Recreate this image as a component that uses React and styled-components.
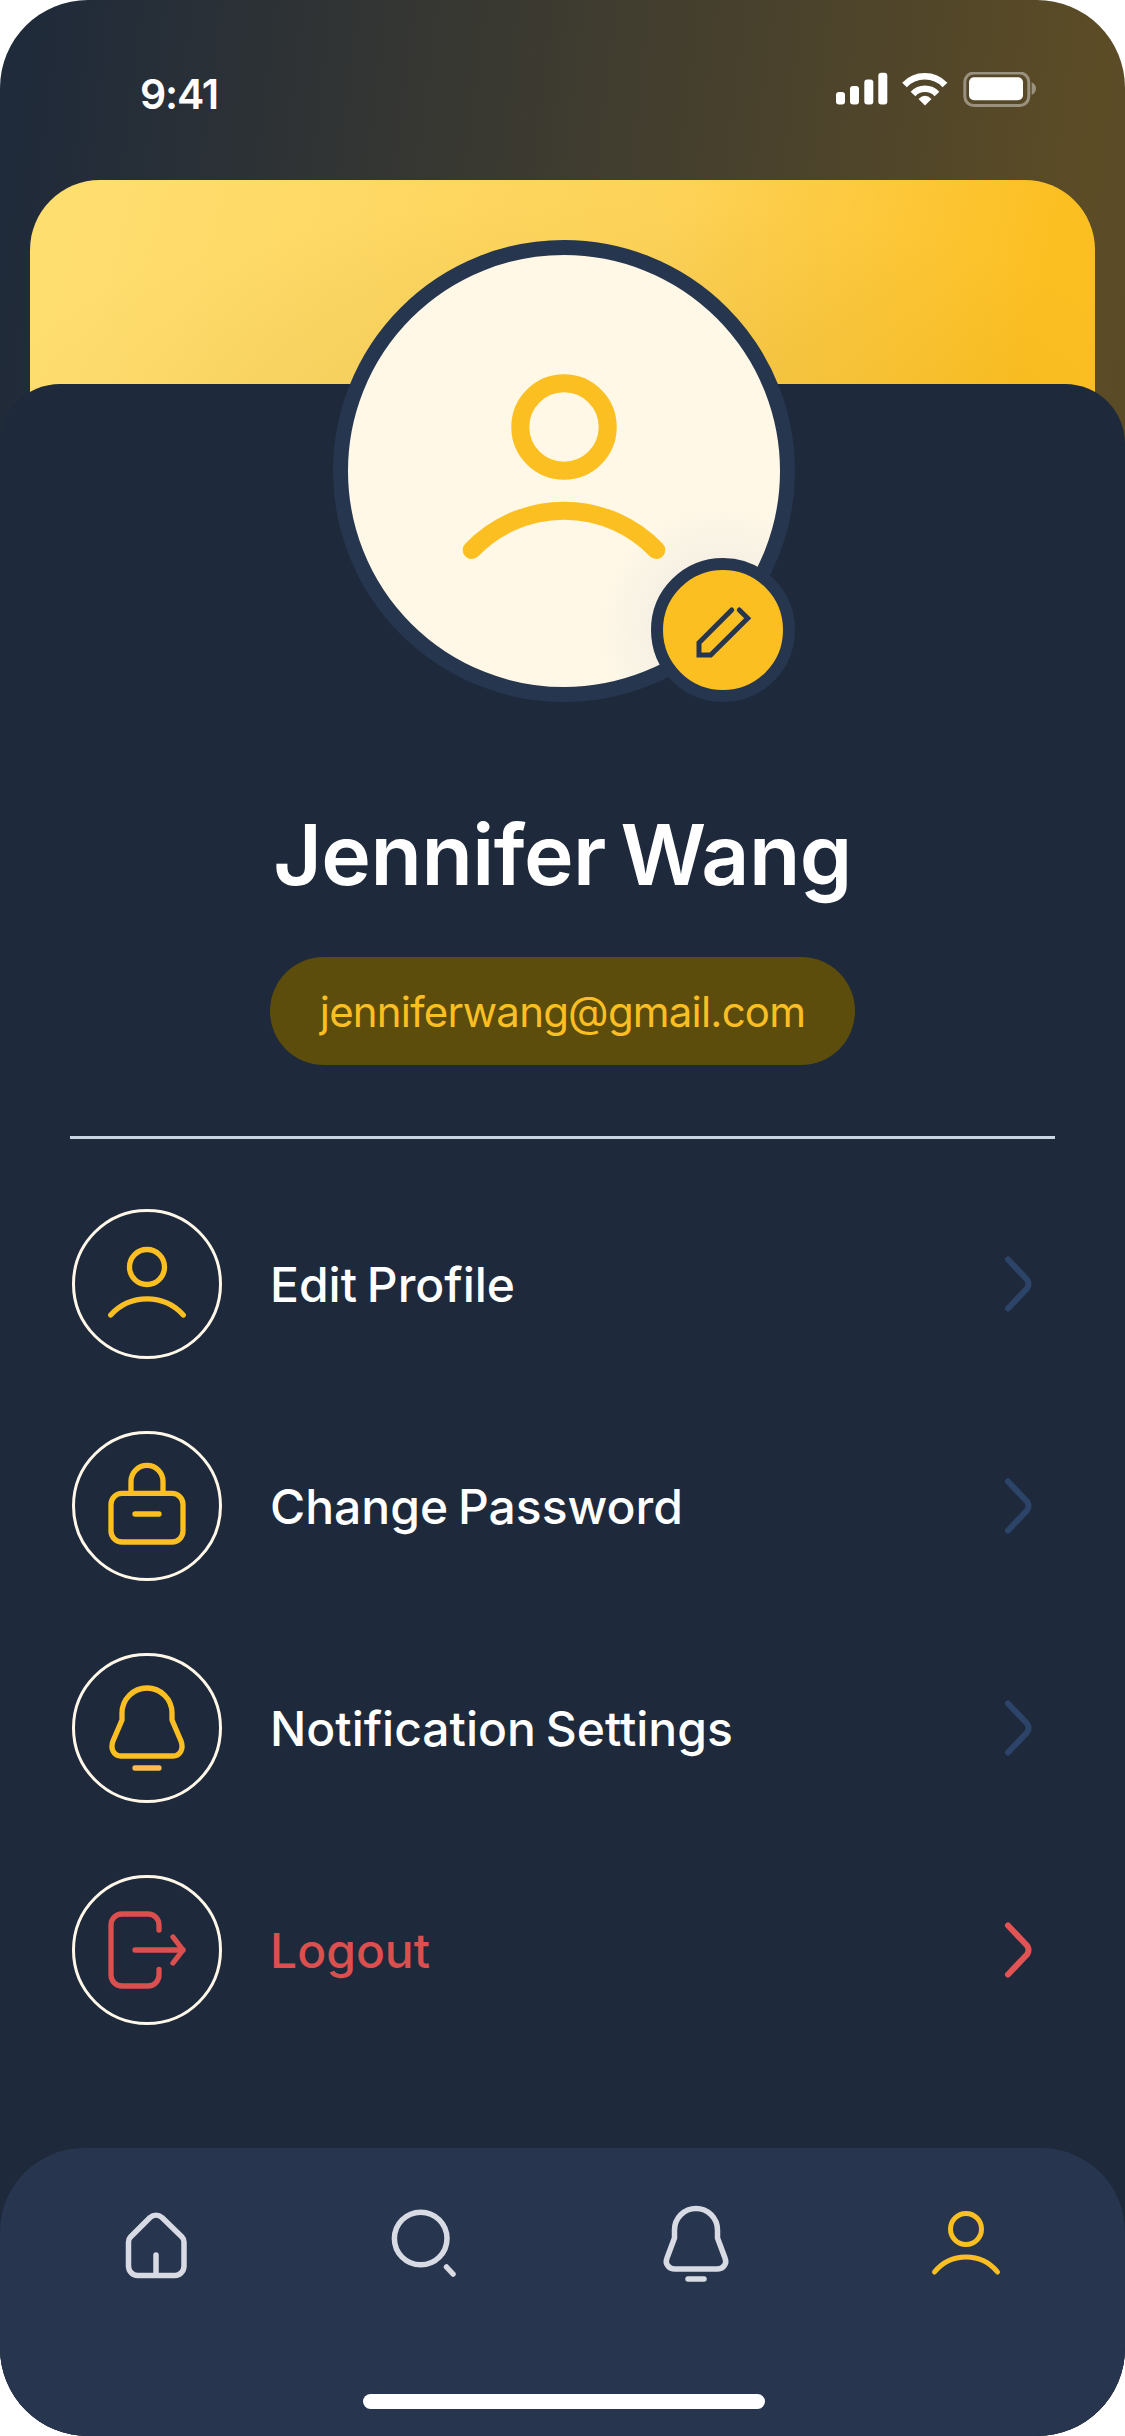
import React from "react";
import styled, { createGlobalStyle } from "styled-components";

const Global = createGlobalStyle`
  html, body { margin: 0; padding: 0; background: #fff; }
  #root { width: 1125px; height: 2436px; }
`;

const Screen = styled.div`
  width: 1125px;
  height: 2436px;
  display: flex;
  flex-direction: column;
  overflow: hidden;
  border-radius: 88px;
  background: linear-gradient(97deg, #1f2a3a 2%, #5c4c26 78%, #504329 100%);
  font-family: Inter, "Noto Sans", sans-serif;
`;

const StatusBar = styled.div`
  height: 180px;
  flex: none;
  display: flex;
  justify-content: space-between;
  padding: 72px 88px 0 140px;
  box-sizing: border-box;
  color: #fff;
`;

const Clock = styled.span`
  font-family: Inter, sans-serif;
  font-size: 41px;
  line-height: 42px;
  font-weight: 600;
  letter-spacing: -1.2px;
  margin-top: 1px;
`;

const StatusIcons = styled.svg`
  display: block;
  width: 201px;
  height: 36px;
`;

const HeaderCard = styled.div`
  height: 270px;
  flex: none;
  margin: 0 30px;
  border-radius: 70px 70px 0 0;
  background:
    radial-gradient(ellipse 620px 230px at 560px 250px, rgba(150, 110, 20, 0.13), transparent),
    linear-gradient(103deg, #ffde70 4%, #fdd257 58%, #fcbf22 92%);
`;

const Panel = styled.main`
  flex: 1;
  margin-top: -66px;
  display: flex;
  flex-direction: column;
  border-radius: 60px 60px 0 0;
  background: #1e293b;
  position: relative;
`;

const Profile = styled.section`
  display: flex;
  flex-direction: column;
  align-items: center;
`;

const Avatar = styled.div`
  position: relative;
  width: 462px;
  height: 462px;
  margin: -144px 0 0 3px;
  box-sizing: border-box;
  border: 15px solid #27364f;
  border-radius: 50%;
  background: radial-gradient(circle at 375px 375px, #f6f1e4 72px, #fff8e7 125px);
  display: flex;
  align-items: center;
  justify-content: center;
`;

const AvatarGlyph = styled.svg`
  display: block;
  width: 432px;
  height: 432px;
`;

const EditBadge = styled.div`
  position: absolute;
  right: -15px;
  bottom: -15px;
  width: 144px;
  height: 144px;
  box-sizing: border-box;
  border: 12px solid #27364f;
  border-radius: 50%;
  background: #fcbf22;
`;

const PencilGlyph = styled.svg`
  display: block;
  width: 120px;
  height: 120px;
`;

const Name = styled.h1`
  margin: 103px 0 0;
  font-size: 84px;
  line-height: 100px;
  font-weight: 600;
  color: #fff;
  letter-spacing: -0.5px;
  word-spacing: -6px;
`;

const EmailPill = styled.div`
  margin-top: 52px;
  width: 585px;
  height: 108px;
  border-radius: 54px;
  background: #5c4d0c;
  color: #fcbf22;
  font-size: 42px;
  font-weight: 400;
  letter-spacing: -0.8px;
  display: flex;
  align-items: center;
  justify-content: center;
`;

const Divider = styled.hr`
  align-self: stretch;
  margin: 71px 70px 0;
  height: 3px;
  border: 0;
  background: #cbd5e1;
`;

const Menu = styled.div`
  margin-top: 70px;
  padding: 0 89px 0 72px;
  display: flex;
  flex-direction: column;
  gap: 72px;
`;

const Row = styled.div`
  height: 150px;
  display: flex;
  align-items: center;
  gap: 48px;
  color: ${(p) => (p.$danger ? "#dc4f4f" : "#fff")};
`;

const IconRing = styled.div`
  width: 150px;
  height: 150px;
  flex: none;
  box-sizing: border-box;
  border: 3px solid #fff7e8;
  border-radius: 50%;
`;

const RingGlyph = styled.svg`
  display: block;
  width: 144px;
  height: 144px;
`;

const RowLabel = styled.span`
  flex: 1;
  font-size: 48px;
  font-weight: 500;
  line-height: 60px;
  word-spacing: -3px;
  padding-top: 2px;
`;

const Chevron = styled.svg`
  display: block;
  width: 36px;
  height: 62px;
  flex: none;
`;

const Nav = styled.nav`
  margin-top: auto;
  height: 288px;
  box-sizing: border-box;
  padding-top: 52px;
  display: flex;
  flex-direction: column;
  border-radius: 84px;
  background: #27354f;
`;

const NavIcons = styled.div`
  display: flex;
  gap: 186px;
  padding-left: 114px;
`;

const NavGlyph = styled.svg`
  display: block;
  width: 84px;
  height: 84px;
`;

const HomeIndicator = styled.div`
  margin: 110px 0 0 363px;
  width: 402px;
  height: 15px;
  border-radius: 8px;
  background: #fff;
`;

const YELLOW = "#fcbf22";
const GREY = "#d8dbe3";
const RED = "#dc4f4f";

const Stroke = ({ color, width = 5.3, children }) => (
  <g fill="none" stroke={color} strokeWidth={width} strokeLinecap="round" strokeLinejoin="round">
    {children}
  </g>
);

const BELL =
  "M47 64 L38 85 C35 93 39 100 46 100 H98 C105 100 109 93 106 85 L97 64 V57 A25 25 0 0 0 47 57 Z";

const menu = [
  {
    label: "Edit Profile",
    glyph: (
      <Stroke color={YELLOW}>
        <circle cx="72" cy="55" r="17.5" />
        <path d="M35.7 103 A49 49 0 0 1 108.3 103" />
      </Stroke>
    ),
  },
  {
    label: "Change Password",
    glyph: (
      <Stroke color={YELLOW}>
        <rect x="36" y="59.4" width="72" height="48.6" rx="11" />
        <path d="M56 59 V47.4 A16 16 0 0 1 88 47.4 V59" />
        <path d="M60 80 H84" />
      </Stroke>
    ),
  },
  {
    label: "Notification Settings",
    glyph: (
      <>
        <Stroke color={YELLOW}>
          <path d={BELL} />
        </Stroke>
        <Stroke color="#ffbb4f">
          <path d="M60 112 H84" />
        </Stroke>
      </>
    ),
  },
  {
    label: "Logout",
    danger: true,
    glyph: (
      <Stroke color={RED}>
        <path d="M84 52 V47 A11 11 0 0 0 73 36 H47 A11 11 0 0 0 36 47 V97 A11 11 0 0 0 47 108 H73 A11 11 0 0 0 84 97 V91.5" />
        <path d="M60 72 H108" />
        <path d="M98 59 L108 72 L98 85" />
      </Stroke>
    ),
  },
];

export default function App() {
  return (
    <Screen>
      <Global />
      <StatusBar>
        <Clock>9:41</Clock>
        <StatusIcons viewBox="0 0 201 36">
          <rect x="0" y="20" width="9" height="12.5" rx="3" fill="#fff" />
          <rect x="14" y="14" width="9" height="18.5" rx="3" fill="#fff" />
          <rect x="28.3" y="7.5" width="9" height="25" rx="3" fill="#fff" />
          <rect x="42.3" y="0.8" width="9" height="31.7" rx="3" fill="#fff" />
          <g fill="none" stroke="#fff" strokeWidth="6.5">
            <path d="M68.5 13 A28 28 0 0 1 109 13" />
            <path d="M77 22 A16.5 16.5 0 0 1 101 22" />
          </g>
          <path d="M82.5 27 Q89 20.5 95.5 27 L89 33.5 Z" fill="#fff" />
          <rect x="128.8" y="1" width="64" height="32.5" rx="9" fill="none" stroke="#fff" strokeOpacity="0.4" strokeWidth="3" />
          <rect x="133" y="5.3" width="54" height="23" rx="5" fill="#fff" />
          <path d="M195.7 10.3 C198.5 11.5 200 14 200 16.5 C200 19 198.5 21.5 195.7 23 Z" fill="#fff" fillOpacity="0.4" />
        </StatusIcons>
      </StatusBar>
      <HeaderCard />
      <Panel>
        <Profile>
          <Avatar>
            <AvatarGlyph viewBox="0 0 432 432">
              <Stroke color={YELLOW} width={18}>
                <circle cx="216" cy="172" r="43.7" />
                <path d="M123.7 295 A128 128 0 0 1 308.3 295" />
              </Stroke>
            </AvatarGlyph>
            <EditBadge>
              <PencilGlyph viewBox="0 0 120 120">
                <path
                  d="M68.7 40 L36 72.7 V85 H47.7 L84.7 48.3 L76.3 40"
                  fill="none"
                  stroke="#27364f"
                  strokeWidth="5"
                  strokeLinecap="round"
                  strokeLinejoin="miter"
                />
              </PencilGlyph>
            </EditBadge>
          </Avatar>
          <Name>Jennifer Wang</Name>
          <EmailPill>jenniferwang@gmail.com</EmailPill>
          <Divider />
        </Profile>
        <Menu>
          {menu.map((m) => (
            <Row key={m.label} $danger={m.danger}>
              <IconRing>
                <RingGlyph viewBox="0 0 144 144">{m.glyph}</RingGlyph>
              </IconRing>
              <RowLabel>{m.label}</RowLabel>
              <Chevron viewBox="0 0 36 62">
                <Stroke color={m.danger ? "#e25454" : "#2c4468"} width={6}>
                  <path d="M8 6.5 L27 26.5 Q30 31 27 35.5 L8 55.5" />
                </Stroke>
              </Chevron>
            </Row>
          ))}
        </Menu>
        <Nav>
          <NavIcons>
            <NavGlyph viewBox="0 0 84 84">
              <Stroke color={GREY} width={5.5}>
                <path d="M14.5 42 C14.5 40 15 38.5 16.5 37 L36 17.5 C39.5 14.5 44.5 14.5 48 17.5 L68 37 C69.5 38.5 70 40 70 42 V66 C70 71 66 75.5 61 75.5 H23.5 C18.5 75.5 14.5 71 14.5 66 Z" />
                <path d="M42 55 V75" />
              </Stroke>
            </NavGlyph>
            <NavGlyph viewBox="0 0 84 84">
              <Stroke color={GREY} width={5.5}>
                <circle cx="36.7" cy="38.5" r="26.3" />
                <path d="M62.5 67 L69 74" />
              </Stroke>
            </NavGlyph>
            <NavGlyph viewBox="0 0 84 84">
              <Stroke color={GREY} width={5.5}>
                <path d="M20.5 38 L13 58 C10.5 64 15 69 21 69 H63 C69 69 73.5 64 71 58 L63.5 38 V30 A21.5 21.5 0 0 0 20.5 30 Z" />
                <path d="M34 79 H50" />
              </Stroke>
            </NavGlyph>
            <NavGlyph viewBox="0 0 84 84">
              <Stroke color={YELLOW} width={5}>
                <circle cx="42" cy="29" r="15.5" />
                <path d="M10.5 72 A40.6 40.6 0 0 1 73.5 72" />
              </Stroke>
            </NavGlyph>
          </NavIcons>
          <HomeIndicator />
        </Nav>
      </Panel>
    </Screen>
  );
}
